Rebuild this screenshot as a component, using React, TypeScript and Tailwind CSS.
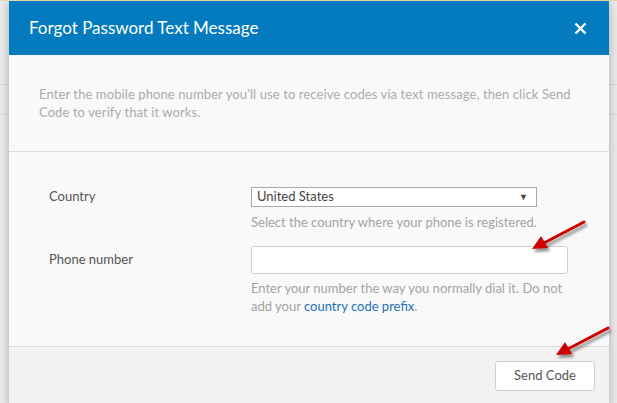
import React from "react";

const Arrow = ({ className }: { className: string }) => (
  <svg className={className} width="60" height="36" viewBox="0 0 60 36">
    <defs>
      <filter id="sh" x="-20%" y="-20%" width="150%" height="160%">
        <feDropShadow dx="2" dy="3" stdDeviation="1.6" floodColor="#000" floodOpacity="0.45" />
      </filter>
    </defs>
    <g filter="url(#sh)">
      <line x1="56" y1="3" x2="14" y2="25" stroke="#c00" strokeWidth="3" strokeLinecap="round" />
      <polygon points="4,30 13,17 20,29" fill="#c00" />
    </g>
  </svg>
);

const App = () => {
  return (
    <div
      className="relative w-[617px] h-[403px] overflow-hidden bg-[#ececec] border-t border-[#e6d8a6]"
      style={{ fontFamily: "Lato, 'Open Sans', sans-serif" }}
    >
      {/* page behind the dialog */}
      <div className="flex flex-col">
        <div className="h-[84px] border-b border-[#dcdcdc]" />
        <div className="h-[30px] border-b border-[#dcdcdc]" />
      </div>

      {/* dialog */}
      <div className="absolute left-[9px] top-0 w-[600px] bg-[#f9f9f9] shadow-[0_0_10px_rgba(0,0,0,0.28)]">
        <div className="h-[54px] bg-[#037bbe] flex items-center justify-between pl-[20px] pr-[22px]">
          <span className="text-white text-[17px]">Forgot Password Text Message</span>
          <svg width="13" height="13" viewBox="0 0 13 13">
            <path d="M1.5 1.5 L11.5 11.5 M11.5 1.5 L1.5 11.5" stroke="#fff" strokeWidth="2.4" />
          </svg>
        </div>

        <div className="px-[30px] pt-[30px] pb-[30px] border-b border-[#dddddd]">
          <p className="text-[13px] leading-[18px] text-[#ababab] tracking-[0.1px]">
            Enter the mobile phone number you'll use to receive codes via text message, then click Send Code to verify that it works.
          </p>
        </div>

        <div className="pl-[40px] pt-[35px] pb-[31px] flex flex-col gap-[15px] border-b border-[#dcdcdc]">
          <div className="flex">
            <div className="w-[202px] h-[20px] flex items-center text-[13px] text-[#555]">Country</div>
            <div className="flex flex-col">
              <div className="w-[286px] h-[20px] bg-white border border-[#a9a9a9] flex items-center justify-between pl-[5px] pr-[8px]">
                <span className="text-[13px] text-[#444]">United States</span>
                <span className="text-[9px] text-[#444]">▼</span>
              </div>
              <p className="mt-[6px] text-[13px] leading-[18px] text-[#a3a3a3]">
                Select the country where your phone is registered.
              </p>
            </div>
          </div>

          <div className="flex">
            <div className="w-[202px] h-[28px] flex items-center text-[13px] text-[#555]">Phone number</div>
            <div className="flex flex-col">
              <div className="w-[317px] h-[28px] bg-white border border-[#cfcfcf] rounded-[3px]" />
              <p className="mt-[5px] w-[317px] text-[13px] leading-[18px] text-[#a3a3a3]">
                Enter your number the way you normally dial it. Do not add your{" "}
                <a className="text-[#1f72b4]">country code prefix</a>.
              </p>
            </div>
          </div>
        </div>

        <div className="h-[62px] bg-[#f2f2f2] flex justify-end pt-[14px] pr-[14px]">
          <button className="w-[100px] h-[30px] bg-white border border-[#cfcfcf] rounded-[3px] text-[13px] text-[#555]">
            Send Code
          </button>
        </div>
      </div>

      {/* annotation arrows */}
      <Arrow className="absolute left-[528px] top-[218px]" />
      <Arrow className="absolute left-[552px] top-[324px]" />
    </div>
  );
};

export default App;
